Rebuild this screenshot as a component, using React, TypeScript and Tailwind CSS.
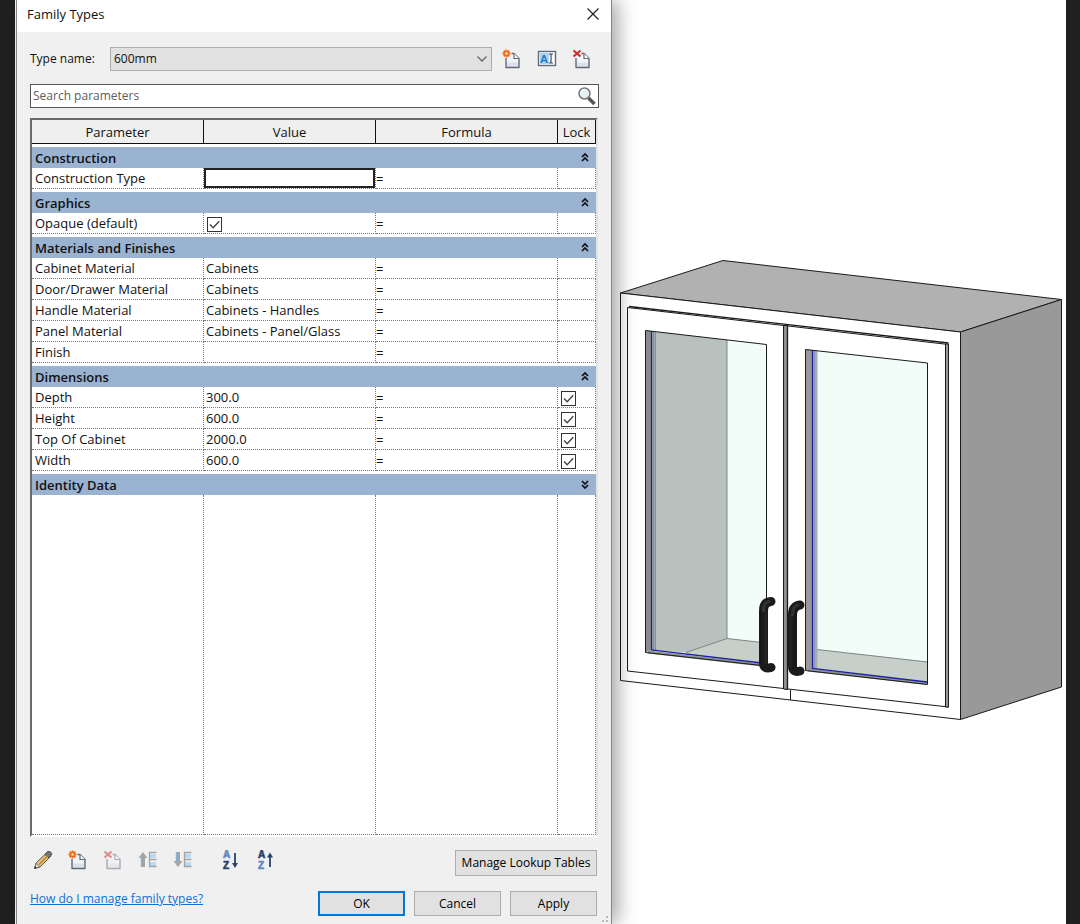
import { useState } from 'react'
import type { ReactNode } from 'react'

/* -------------------------------------------------------------------------
   Family Types dialog, docked on the left of the 3D view.
   ------------------------------------------------------------------------- */

type Param = { name: string; value?: string; edit?: boolean; checked?: boolean; lock?: boolean }
type Group = { title: string; open: boolean; params: Param[] }

const GROUPS: Group[] = [
  { title: 'Construction', open: true, params: [{ name: 'Construction Type', edit: true }] },
  { title: 'Graphics', open: true, params: [{ name: 'Opaque (default)', checked: true }] },
  {
    title: 'Materials and Finishes',
    open: true,
    params: [
      { name: 'Cabinet Material', value: 'Cabinets' },
      { name: 'Door/Drawer Material', value: 'Cabinets' },
      { name: 'Handle Material', value: 'Cabinets - Handles' },
      { name: 'Panel Material', value: 'Cabinets - Panel/Glass' },
      { name: 'Finish' },
    ],
  },
  {
    title: 'Dimensions',
    open: true,
    params: [
      { name: 'Depth', value: '300.0', lock: true },
      { name: 'Height', value: '600.0', lock: true },
      { name: 'Top Of Cabinet', value: '2000.0', lock: true },
      { name: 'Width', value: '600.0', lock: true },
    ],
  },
  { title: 'Identity Data', open: false, params: [] },
]

function IconButton({ label, disabled, children }: { label: string; disabled?: boolean; children: ReactNode }) {
  return (
    <button type="button" aria-label={label} disabled={disabled} className="h-5 w-5 shrink-0">
      <svg viewBox="0 0 20 20" className="h-5 w-5">{children}</svg>
    </button>
  )
}

function Page() {
  return (
    <>
      <path d="M4 7.500V18.500H17V9L12 4.500H9V7.500z" fill="#f1f3f7" />
      <path d="M4.500 13.500h12v4.500H4.500z" fill="#dde1e9" />
      <path d="M4 9V18.500H17V9.500L12 4.500H9.500" fill="none" stroke="#626a7a" strokeWidth="1.400" strokeLinejoin="round" />
      <path d="M12 4.500V9.500H17" fill="#fff" stroke="#626a7a" strokeWidth="1.200" />
    </>
  )
}

function NewIcon() {
  return (
    <>
      <Page />
      <path d="M4.500 .5v8M.5 4.500h8M1.700 1.700l5.600 5.600M7.300 1.700L1.700 7.300" stroke="#e8691b" strokeWidth="1.800" />
      <circle cx="4.500" cy="4.500" r="1.800" fill="#ffe08a" stroke="#e8691b" />
    </>
  )
}

function DeleteIcon() {
  return (
    <>
      <Page />
      <path d="M1.500 1.500l7 6M8.500 1.500l-7 6" stroke="#cf2f2c" strokeWidth="2.300" />
    </>
  )
}

function RenameIcon() {
  return (
    <>
      <rect x="1.500" y="2.500" width="17" height="14" fill="#fff" stroke="#5f6b7d" strokeWidth="1.400" />
      <rect x="3" y="4" width="9" height="11" fill="#a9d4f3" />
      <text x="3" y="14" fontSize="11" fontWeight="700" fill="#1f78c4" fontFamily="Liberation Sans, sans-serif">A</text>
      <path d="M12 5h4M12 14h4M14 5v9" stroke="#3c4656" strokeWidth="1.200" />
    </>
  )
}

function PencilIcon() {
  return (
    <>
      <path d="M1.500 18.500l2-6L14 2.500l4 3.500L7 17z" fill="#e5c283" stroke="#5b5347" strokeWidth="1" />
      <path d="M12 4.500l2.500-3q3-1 4.500 2.500l-3 4z" fill="#7b7371" stroke="#554f4e" />
      <path d="M6 14.500l9-9" stroke="#b5842f" strokeWidth="1.500" />
      <path d="M1.500 18.500l1.500-5 3.500 3.500z" fill="#fbf3e3" stroke="#5b5347" strokeWidth=".8" />
      <path d="M1.500 18.500l.7-2.400 1.700 1.700z" fill="#333" />
    </>
  )
}

// disabled "move parameter" arrows
function MoveIcon({ down }: { down?: boolean }) {
  return (
    <>
      <path
        d={down ? 'M3 2h4v9h2.500L5 17 .5 11H3z' : 'M3 17V8H.5L5 2l4.500 6H7v9z'}
        fill="#a4a4a4"
      />
      <path d={down ? 'M3.500 2v9' : 'M3.500 8v9'} stroke="#7cb5e0" strokeWidth="1.400" />
      <path d="M12 4h6v4h-6zM12 12h6v4h-6z" fill="#b9daf2" />
      <path d="M18.500 2.500h-7v14h7M11.500 9.500h7" fill="none" stroke="#a4a4a4" strokeWidth="1.300" />
    </>
  )
}

function SortIcon({ up }: { up?: boolean }) {
  return (
    <>
      <text x="1" y="8" fontSize="10" fontWeight="700" fill={up ? '#26436b' : '#5f8bbd'} stroke={up ? '#26436b' : '#5f8bbd'} strokeWidth=".6" fontFamily="Liberation Sans, sans-serif">A</text>
      <text x="1" y="19" fontSize="10" fontWeight="700" fill={up ? '#5f8bbd' : '#26436b'} stroke={up ? '#5f8bbd' : '#26436b'} strokeWidth=".6" fontFamily="Liberation Sans, sans-serif">Z</text>
      <path d={up ? 'M13 17V5' : 'M13 3v12'} stroke="#26436b" strokeWidth="1.800" />
      <path d={up ? 'M10 7.500l3-5 3 5z' : 'M10 13l3 5 3-5z'} fill="#26436b" />
    </>
  )
}

function CheckBox({ label }: { label: string }) {
  return (
    <span className="relative ml-[3px] mt-1 block h-[15px] w-[15px]">
      <input
        type="checkbox"
        defaultChecked
        aria-label={label}
        className="peer block h-[15px] w-[15px] appearance-none border border-[#333333] bg-white"
      />
      <svg viewBox="0 0 15 15" className="pointer-events-none absolute inset-0 hidden peer-checked:block">
        <path d="M3 7.500l3.200 3.200 6-6.400" fill="none" stroke="#444" strokeWidth="1.400" />
      </svg>
    </span>
  )
}

function ParamTable() {
  const [open, setOpen] = useState(GROUPS.map(g => g.open))
  const head = 'h-6 border-b border-r border-[#111111] bg-[#efefef] p-0 text-center font-normal leading-[18px]'
  const line = 'border-b border-r border-dotted border-[#777777]'
  const cell = `${line} p-0 align-top`

  return (
    <div className="flex flex-1 flex-col bg-white">
      <table className="w-full table-fixed border-separate border-spacing-0 text-[13px] leading-5 text-[#111111]">
        <colgroup>
          <col className="w-[172px]" />
          <col className="w-[172px]" />
          <col />
          <col className="w-[38px]" />
        </colgroup>
        <thead>
          <tr>
            <th className={head}>Parameter</th>
            <th className={head}>Value</th>
            <th className={head}>Formula</th>
            <th className={head}>Lock</th>
          </tr>
        </thead>
        {GROUPS.map((group, i) => (
          <tbody key={group.title}>
            <tr>
              <th colSpan={4} className="border-t-[3px] border-white bg-[#99b3d1] p-0 text-left font-semibold">
                <div className="flex h-[21px] items-center justify-between pl-[3px] pr-1.5">
                  {group.title}
                  <button
                    type="button"
                    aria-label={`Toggle ${group.title}`}
                    aria-expanded={open[i]}
                    onClick={() => setOpen(open.map((o, n) => (n === i ? !o : o)))}
                  >
                    <svg viewBox="0 0 10 12" className="h-3 w-2.5" fill="none" stroke="#111" strokeWidth="1.700">
                      <path d={open[i] ? 'M2 5l3-3 3 3M2 9l3-3 3 3' : 'M2 2l3 3 3-3M2 6l3 3 3-3'} />
                    </svg>
                  </button>
                </div>
              </th>
            </tr>
            {open[i] && group.params.map(p => (
              <tr key={p.name} className="h-[21px]">
                <td className={`${cell} pl-[3px]`}>{p.name}</td>
                <td className={cell}>
                  {p.edit && (
                    <input aria-label={p.name} className="block h-5 w-full border-2 border-[#222222] bg-white px-0.5 outline-none" />
                  )}
                  {p.checked && <CheckBox label={p.name} />}
                  {p.value && <span className="pl-0.5">{p.value}</span>}
                </td>
                <td className={`${line} p-0 pt-0.5 align-top leading-[18px]`}>=</td>
                <td className={cell}>{p.lock && <CheckBox label={`Lock ${p.name}`} />}</td>
              </tr>
            ))}
          </tbody>
        ))}
      </table>
      {/* empty rest of the grid */}
      <div className="grid flex-1 grid-cols-[172px_172px_1fr_38px]">
        <div className={line} />
        <div className={line} />
        <div className={line} />
        <div className={line} />
      </div>
    </div>
  )
}

function Cabinet() {
  return (
    <svg viewBox="620 256 444 466" className="block w-full" role="img" aria-label="Cabinet" stroke="#1a1a1a" fill="none">
      <defs>
        <linearGradient id="tube" x1="0" x2="1">
          <stop offset="0" stopColor="#151515" />
          <stop offset=".5" stopColor="#3c3c3c" />
          <stop offset="1" stopColor="#151515" />
        </linearGradient>
      </defs>
      {/* carcass */}
      <path d="M620.500 293L723 260.500 1061.500 299.500 960.500 332z" fill="#b1b1b1" />
      <path d="M960.500 332L1061.500 299.500V687L960.500 719.500z" fill="#999" />
      <path d="M620.500 293L960.500 332V719.500L620.500 680.500z" fill="#fff" />
      {/* doors */}
      <path d="M627.500 671V307.500L948.500 344.500V707z" />
      <path d="M629 306.500L948.500 343" strokeWidth="1.300" />
      <path d="M945.500 344h3v363h-3z" fill="#999" />
      <path d="M783.500 325.500h4v364l-4-.5z" fill="#8d8f93" />
      <path d="M787.500 325v364" strokeWidth="1.300" />
      <path d="M790.500 690v10" />

      {/* left glass */}
      <path d="M645.500 330.500L766.500 344.500V666L645.500 652.500z" fill="#f2fdf9" stroke="none" />
      <path d="M655 331.500L727 340V638.500L686 652.500 655 650z" fill="#b8c1be" stroke="none" />
      <path d="M727 638.500L766.500 643V664L686 654.500V652.500z" fill="#c7cfca" stroke="none" />
      <path d="M727 340V638.500L686 652.500M727 638.500L766.500 643" stroke="#7c8581" />
      <path d="M645.500 330.500L651.500 331V650L645.500 652.500z" fill="#8b8b8b" stroke="none" />
      <path d="M652 331h4v320h-4z" fill="#a4aeb5" stroke="none" />
      <path d="M655.500 332V650" stroke="#879390" />
      <path d="M653.500 332V650" stroke="#7f86c0" />
      <path d="M648 652L766 665.500" stroke="#8c9490" strokeWidth="3" />
      <path d="M651.500 331V650L766 663.500" stroke="#2020a0" strokeWidth="1.300" />
      <path d="M766.500 666V344.500L645.500 330.500V652.500L766 666" />

      {/* right glass */}
      <path d="M805.500 349.500L927.500 363V684.500L805.500 670.500z" fill="#f2fdf9" stroke="none" />
      <path d="M817 649.500L927.500 662V682L817 669z" fill="#c7cfca" stroke="none" />
      <path d="M817 649.500L927.500 662" stroke="#7c8581" />
      <path d="M805.500 349.500L812.500 350V669L805.500 670.500z" fill="#999" stroke="none" />
      <path d="M813 350.500L817.500 351V669h-4.500z" fill="#a3adb5" stroke="none" />
      <path d="M814.500 351V669" stroke="#8b93c4" />
      <path d="M808 670L927 683.500" stroke="#8c9490" strokeWidth="3" />
      <path d="M812.500 350V668.500L927 682" stroke="#2020a0" strokeWidth="1.300" />
      <path d="M927.500 684.500V363L805.500 349.500V670.500z" />

      {/* handles */}
      <g stroke="#1b1b1b" strokeWidth="9" strokeLinecap="round" strokeLinejoin="round">
        <path d="M771 601.500Q763.500 602 763.500 611V663Q763.500 669.500 771 667.500" />
        <path d="M800 605Q792.500 606 792.500 615V666Q792.500 673 800 671" />
      </g>
      <g fill="url(#tube)" stroke="none">
        <path d="M760 610h7v54h-7zM789 614h7v53h-7z" />
      </g>
      <g stroke="#333" strokeWidth="3" strokeLinecap="round">
        <path d="M769 601.500Q763.500 602 763.500 611" />
        <path d="M798 605Q792.500 606 792.500 615" />
      </g>
    </svg>
  )
}

export default function App() {
  const push = 'border border-[#adadad] bg-[#e1e1e1] text-center text-black'

  return (
    <div className="flex min-h-screen border-l-[15px] border-r-[14px] border-[#202020] bg-white font-['Open_Sans','Noto_Sans',sans-serif] text-xs text-[#111111]">
      <section
        aria-label="Family Types"
        className="relative ml-px flex w-[596px] shrink-0 flex-col border-x border-[#858585] bg-[#f0f0f0] shadow-[6px_0_18px_rgba(0,0,0,0.35)]"
      >
        <header className="flex h-8 items-start justify-between bg-white pl-2.5 pr-2.5">
          <h1 className="pt-1 text-[13px] leading-5">Family Types</h1>
          <button type="button" aria-label="Close" className="mt-1.5 h-4 w-4">
            <svg viewBox="0 0 16 16" className="h-4 w-4" stroke="#222" strokeWidth="1.200">
              <path d="M2.500 2.500l11 11M13.500 2.500l-11 11" />
            </svg>
          </button>
        </header>

        <div className="flex flex-1 flex-col pb-2 pl-[13px] pr-3 pt-[15px]">
          <div className="flex h-6 items-center">
            <label htmlFor="type-name" className="w-20">Type name:</label>
            <div className="relative flex-1">
              <select id="type-name" className="block h-6 w-full appearance-none border border-[#adadad] bg-[#e1e1e1] pl-[3px]">
                <option>600mm</option>
              </select>
              <svg viewBox="0 0 12 8" className="pointer-events-none absolute right-1 top-2 h-2 w-3" fill="none" stroke="#666" strokeWidth="1.300">
                <path d="M1.500 1.500L6 6l4.500-4.500" />
              </svg>
            </div>
            <div className="ml-2.5 mr-[7px] flex gap-[15px]">
              <IconButton label="New type"><NewIcon /></IconButton>
              <IconButton label="Rename type"><RenameIcon /></IconButton>
              <IconButton label="Delete type"><DeleteIcon /></IconButton>
            </div>
          </div>

          <div className="mt-[13px] flex h-6 items-center border border-[#555555] bg-white pl-0.5 pr-0.5">
            <input
              aria-label="Search parameters"
              placeholder="Search parameters"
              className="min-w-0 flex-1 outline-none placeholder:text-[#5c5c5c]"
            />
            <button type="button" aria-label="Search" className="h-5 w-5">
              <svg viewBox="0 0 20 20" className="h-5 w-5">
                <path d="M12.500 12l6 6" stroke="#555" strokeWidth="3.600" />
                <circle cx="8.500" cy="7.500" r="5.500" fill="#e3f1f4" stroke="#777" strokeWidth="1.500" />
                <path d="M5 7q.5-3 3.500-3.500" fill="none" stroke="#fff" strokeWidth="1.500" />
              </svg>
            </button>
          </div>

          <div className="mr-px mt-2.5 flex flex-1 border-2 border-b-white border-l-[#6a6a6a] border-r-[#e3e3e3] border-t-[#6a6a6a]">
            <ParamTable />
          </div>

          <div className="mr-0.5 mt-[13px] flex h-[26px] items-start gap-[15px] pl-[3px]">
            <IconButton label="Edit parameter"><PencilIcon /></IconButton>
            <IconButton label="New parameter"><NewIcon /></IconButton>
            <IconButton label="Delete parameter" disabled><g opacity=".5"><DeleteIcon /></g></IconButton>
            <IconButton label="Move up" disabled><MoveIcon /></IconButton>
            <IconButton label="Move down" disabled><MoveIcon down /></IconButton>
            <div className="ml-3.5 flex gap-[15px]">
              <IconButton label="Sort ascending"><SortIcon /></IconButton>
              <IconButton label="Sort descending"><SortIcon up /></IconButton>
            </div>
            <button type="button" className={`${push} ml-auto h-[26px] w-[142px]`}>Manage Lookup Tables</button>
          </div>

          <div className="mr-0.5 mt-[15px] flex items-start gap-[9px]">
            <a href="#help" className="mr-auto text-[#0f6fd6] underline">How do I manage family types?</a>
            <button type="button" className="h-[25px] w-[87px] border-2 border-[#0078d7] bg-[#e1e1e1] text-center text-black">OK</button>
            <button type="button" className={`${push} h-[25px] w-[87px]`}>Cancel</button>
            <button type="button" className={`${push} h-[25px] w-[87px]`}>Apply</button>
          </div>
        </div>

        {/* resize grip */}
        <svg viewBox="0 0 8 8" className="absolute bottom-0 right-0.5 h-2 w-2" fill="#b8b8b8">
          <path d="M5 0h2v2H5zM1 4h2v2H1zM5 4h2v2H5z" />
        </svg>
      </section>

      <main className="min-w-0 flex-1 pl-2 pr-0.5 pt-64">
        <Cabinet />
      </main>
    </div>
  )
}
